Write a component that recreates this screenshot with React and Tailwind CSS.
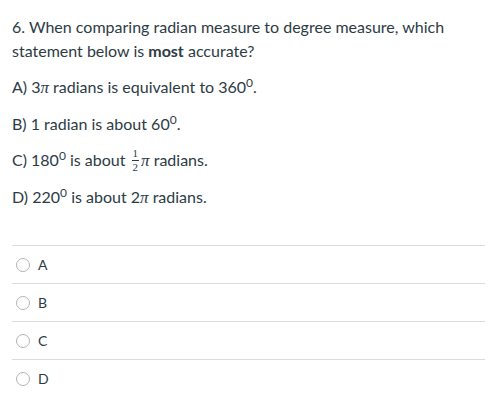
import React from 'react'

const Pi = () => (
  <span className="italic text-[17px]" style={{ fontFamily: '"Liberation Serif", serif' }}>π</span>
)

const Deg = () => <span className="text-[12px] relative -top-[6px] leading-none">0</span>

const Half = () => (
  <span className="inline-flex flex-col items-center align-middle leading-none mx-[2px] -mt-[3px] text-[11px]" style={{ fontFamily: '"Liberation Serif", serif' }}>
    <span className="px-[1px] pb-[1px]">1</span>
    <span className="px-[1px] pt-[1px] border-t border-[#2d3b45]">2</span>
  </span>
)

const choices = ['A', 'B', 'C', 'D']

export default function App() {
  return (
    <div className="w-[494px] h-[406px] bg-white text-[#2d3b45] text-[16px] leading-6 px-3 pt-[15px]" style={{ fontFamily: 'Lato, "Noto Sans", sans-serif' }}>
      <div className="space-y-3 pr-2">
        <p>6. When comparing radian measure to degree measure, which statement below is <strong className="font-bold">most</strong> accurate?</p>
        <p>A) 3<Pi /> radians is equivalent to 360<Deg />.</p>
        <p>B) 1 radian is about 60<Deg />.</p>
        <p>C) 180<Deg /> is about <Half /><Pi /> radians.</p>
        <p>D) 220<Deg /> is about 2<Pi /> radians.</p>
      </div>
      <div className="mt-[35px] w-[473px]">
        {choices.map((c) => (
          <div key={c} className="h-[38px] border-t border-[#dcdcdc] flex items-center">
            <span className="w-[14px] h-[14px] rounded-full border border-[#b4b4b4] ml-[4px] mr-[8px]" />
            <span className="text-[14px]">{c}</span>
          </div>
        ))}
      </div>
    </div>
  )
}
